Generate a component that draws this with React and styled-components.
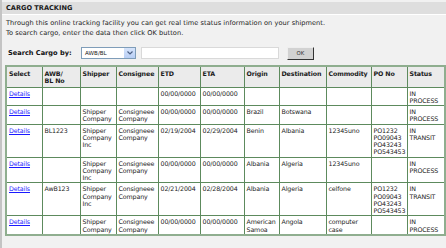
import React from 'react';
import styled, { createGlobalStyle } from 'styled-components';

const GlobalStyle = createGlobalStyle`
  html, body {
    margin: 0;
    padding: 0;
    background: #f1f1f1;
  }
  body {
    font-family: "DejaVu Sans", Verdana, sans-serif;
    font-size: 6.6px;
    color: #222;
  }
`;

const Page = styled.div`
  width: 446px;
  height: 248px;
  box-sizing: border-box;
  border-left: 2px solid #c4c4c4;
  padding-top: 2px;
  overflow: hidden;
`;

const TitleBar = styled.div`
  height: 12px;
  background: #dedede;
  border-bottom: 1px solid #ffffff;
  display: flex;
  align-items: center;
  padding-left: 4px;
  font-weight: bold;
  color: #1a1a1a;
`;

const Intro = styled.p`
  margin: 4px 0 0 4px;
  line-height: 9.5px;
  letter-spacing: 0.05px;
  color: #222;
`;

const SearchRow = styled.div`
  display: flex;
  align-items: center;
  margin: 9px 0 0 6px;
  height: 12px;
`;

const SearchLabel = styled.span`
  font-weight: bold;
  width: 73px;
  color: #111;
`;

const SelectBox = styled.div`
  width: 50px;
  height: 10px;
  border: 1px solid #7f9db9;
  background: #fff;
  display: flex;
  align-items: center;
  justify-content: space-between;
  padding-left: 3px;
  font-size: 5.6px;
  box-sizing: content-box;
`;

const SelectArrow = styled.span`
  width: 11px;
  height: 10px;
  background: linear-gradient(#d6e4fb, #b9cff5);
  display: flex;
  align-items: center;
  justify-content: center;
`;

const TextBox = styled.div`
  width: 136px;
  height: 10px;
  margin-left: 5px;
  background: #fff;
  border: 1px solid #d9d9d9;
`;

const OkButton = styled.div`
  width: 25px;
  height: 11px;
  margin-left: 8px;
  background: #d2d2d2;
  border-right: 1px solid #333;
  border-bottom: 1px solid #333;
  border-top: 1px solid #eee;
  border-left: 1px solid #eee;
  display: flex;
  align-items: center;
  justify-content: center;
  font-size: 5.4px;
  color: #333;
`;

const Grid = styled.table`
  margin: 6px 0 0 3px;
  width: 439px;
  border-collapse: collapse;
  table-layout: fixed;
  border: 2px solid #8fae8f;
  font-size: 6.3px;
  letter-spacing: -0.12px;
  line-height: 7.25px;
`;

const HeadCell = styled.th`
  box-sizing: border-box;
  width: ${p => p.$w}px;
  background: #ebebeb;
  border: 1px solid #5d8a5d;
  text-align: left;
  vertical-align: top;
  padding: 3px 1px 2px 2px;
  font-weight: bold;
  color: #1a1a1a;
  height: 21px;
  overflow: hidden;
`;

const Cell = styled.td`
  box-sizing: border-box;
  background: #fff;
  border: 1px solid #5d8a5d;
  vertical-align: top;
  padding: 2px 1px 1px 2px;
  color: #222;
  white-space: pre-line;
  overflow: hidden;
`;

const DetailsLink = styled.a`
  color: #1a1aff;
  text-decoration: underline;
`;

const columns = [
  ['Select', 36], ['AWB/\nBL No', 38], ['Shipper', 36], ['Consignee', 42],
  ['ETD', 42], ['ETA', 44], ['Origin', 35], ['Destination', 47],
  ['Commodity', 45], ['PO No', 36], ['Status', 38],
];

const PO = 'PO1232\nPO09043\nPO43243\nPO543453';

const rows = [
  ['', '', '', '00/00/0000', '00/00/0000', '', '', '', '', 'IN\nPROCESS'],
  ['', 'Shipper\nCompany', 'Consigneee\nCompany', '00/00/0000', '00/00/0000', 'Brazil', 'Botswana', '', '', 'IN\nPROCESS'],
  ['BL1223', 'Shipper\nCompany\nInc', 'Consigneee\nCompany', '02/19/2004', '02/29/2004', 'Benin', 'Albania', '12345uno', PO, 'IN\nTRANSIT'],
  ['', 'Shipper\nCompany\nInc', 'Consigneee\nCompany', '00/00/0000', '00/00/0000', 'Albania', 'Algeria', '12345uno', '', 'IN\nPROCESS'],
  ['AwB123', 'Shipper\nCompany\nInc', 'Consigneee\nCompany', '02/21/2004', '02/28/2004', 'Albania', 'Algeria', 'celfone', PO, 'IN\nTRANSIT'],
  ['', 'Shipper\nCompany', 'Consigneee\nCompany', '00/00/0000', '00/00/0000', 'American\nSamoa', 'Angola', 'computer\ncase', '', 'IN\nPROCESS'],
];

const App = () => {
  return (
    <Page>
      <GlobalStyle />
      <TitleBar>CARGO TRACKING</TitleBar>
      <Intro>
        Through this online tracking facility you can get real time status information on your shipment.
        <br />
        To search cargo, enter the data then click OK button.
      </Intro>
      <SearchRow>
        <SearchLabel>Search Cargo by:</SearchLabel>
        <SelectBox>
          AWB/BL
          <SelectArrow>
            <svg width="6" height="4" viewBox="0 0 6 4">
              <path d="M0.5 0.5 L3 3 L5.5 0.5" fill="none" stroke="#4d6185" strokeWidth="1.2" />
            </svg>
          </SelectArrow>
        </SelectBox>
        <TextBox />
        <OkButton>OK</OkButton>
      </SearchRow>
      <Grid>
        <thead>
          <tr>
            {columns.map(([name, w]) => (
              <HeadCell key={name} $w={w}>
                {name.split('\n').map((l, i) => (
                  <React.Fragment key={i}>{i > 0 && <br />}{l}</React.Fragment>
                ))}
              </HeadCell>
            ))}
          </tr>
        </thead>
        <tbody>
          {rows.map((row, r) => (
            <tr key={r}>
              <Cell><DetailsLink href="#">Details</DetailsLink></Cell>
              {row.map((val, c) => (
                <Cell key={c}>{val}</Cell>
              ))}
            </tr>
          ))}
        </tbody>
      </Grid>
    </Page>
  );
};

export default App;
